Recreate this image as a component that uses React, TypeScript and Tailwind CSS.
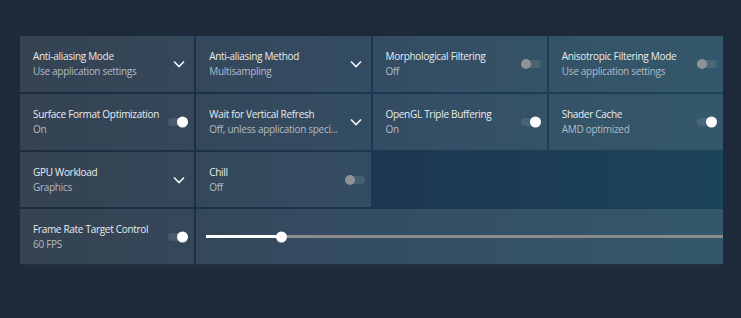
import React from 'react';

type Setting = {
  title: string;
  value: string;
  kind: 'select' | 'on' | 'off';
};

const settings: Setting[] = [
  { title: 'Anti-aliasing Mode', value: 'Use application settings', kind: 'select' },
  { title: 'Anti-aliasing Method', value: 'Multisampling', kind: 'select' },
  { title: 'Morphological Filtering', value: 'Off', kind: 'off' },
  { title: 'Anisotropic Filtering Mode', value: 'Use application settings', kind: 'off' },
  { title: 'Surface Format Optimization', value: 'On', kind: 'on' },
  { title: 'Wait for Vertical Refresh', value: 'Off, unless application speci...', kind: 'select' },
  { title: 'OpenGL Triple Buffering', value: 'On', kind: 'on' },
  { title: 'Shader Cache', value: 'AMD optimized', kind: 'on' },
  { title: 'GPU Workload', value: 'Graphics', kind: 'select' },
  { title: 'Chill', value: 'Off', kind: 'off' },
];

const Chevron = () => (
  <svg width="12" height="8" viewBox="0 0 12 8" className="mr-[3px] shrink-0">
    <polyline points="1,1.5 6,6.5 11,1.5" fill="none" stroke="#f2f4f6" strokeWidth="1.6" />
  </svg>
);

const Toggle = ({ on }: { on: boolean }) => (
  <div className="relative w-[20px] h-[8px] rounded-full bg-white/10 shrink-0">
    {on ? (
      <div className="absolute right-0 top-1/2 -translate-y-1/2 w-[11px] h-[11px] rounded-full bg-white" />
    ) : (
      <div className="absolute left-0 top-1/2 -translate-y-1/2 w-[10px] h-[10px] rounded-full bg-[#8d9299]" />
    )}
  </div>
);

const Tile = ({ s }: { s: Setting }) => (
  <div className="flex items-center justify-between pl-[13px] pr-[6px] bg-white/[0.11]">
    <div className="flex flex-col leading-[15px] min-w-0 tracking-[-0.3px]">
      <span className="text-[10px] text-[#e9ecef] whitespace-nowrap">{s.title}</span>
      <span className="text-[10px] text-[#b3bbc4] whitespace-nowrap">{s.value}</span>
    </div>
    {s.kind === 'select' ? <Chevron /> : <Toggle on={s.kind === 'on'} />}
  </div>
);

export default function App() {
  return (
    <div
      className="w-[741px] h-[318px] bg-[#1c2a3a] pt-[36px] pl-[20px] overflow-hidden"
      style={{ fontFamily: '"Open Sans", "Noto Sans", sans-serif' }}
    >
      <div className="w-[703px] pb-[4px] bg-[#1f2e3f]">
        <div className="grid grid-cols-4 grid-rows-[56px_56px_55px_55px] gap-[2px] bg-linear-to-r from-[#1d2c3d] via-[#1c3750] to-[#1c4459]">
          {settings.map((s) => (
            <Tile key={s.title} s={s} />
          ))}
          <div />
          <div />
          <Tile s={{ title: 'Frame Rate Target Control', value: '60 FPS', kind: 'on' }} />
          <div className="col-span-3 flex items-center pl-[10px] bg-white/[0.11]">
            <div className="relative flex-1 h-[3px] bg-[#8b8b8b]">
              <div className="absolute left-0 top-0 h-[3px] w-[75px] bg-white" />
              <div className="absolute left-[70px] top-1/2 -translate-y-1/2 w-[11px] h-[11px] rounded-full bg-white" />
            </div>
          </div>
        </div>
      </div>
    </div>
  );
}
